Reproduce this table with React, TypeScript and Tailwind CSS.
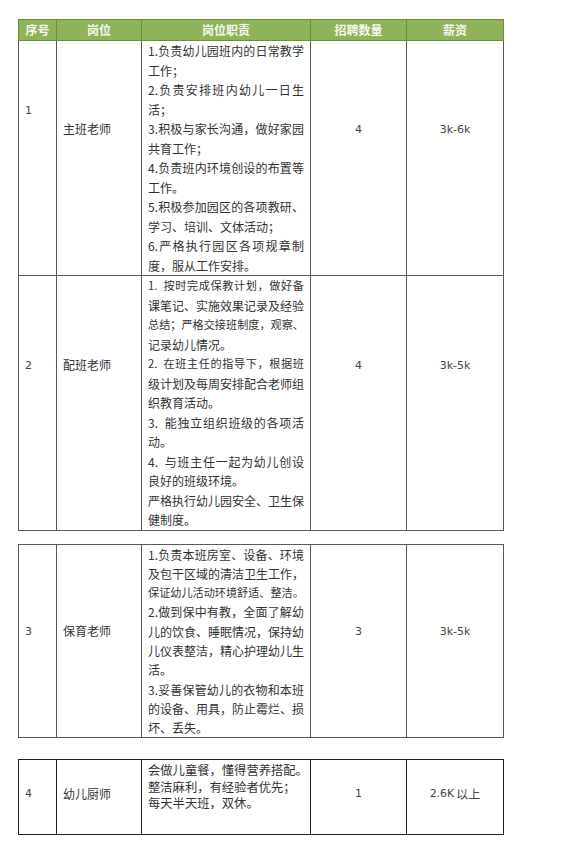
import type { ReactNode } from 'react'

const COLS = 'grid grid-cols-[38px_85px_169px_96px_97px]'
const CJK = { fontFamily: '"Noto Sans CJK SC", "Noto Sans", sans-serif' }
const LATIN = { fontFamily: 'Tahoma, "DejaVu Sans", "Liberation Sans", sans-serif' }

type Row = {
  no: string
  title: string
  duties: string[][]
  count: string
  pay: string
  noPad: string
  titlePad: string
}

const rows1: Row[] = [
  {
    no: '1',
    title: '主班老师',
    count: '4',
    pay: '3k-6k',
    noPad: 'pt-[59px]',
    titlePad: 'pt-[78px]',
    duties: [
      ['1.负责幼儿园班内的日常教学', '工作；'],
      ['2.负责安排班内幼儿一日生', '活；'],
      ['3.积极与家长沟通，做好家园', '共育工作；'],
      ['4.负责班内环境创设的布置等', '工作。'],
      ['5.积极参加园区的各项教研、', '学习、培训、文体活动；'],
      ['6.严格执行园区各项规章制', '度，服从工作安排。'],
    ],
  },
  {
    no: '2',
    title: '配班老师',
    count: '4',
    pay: '3k-5k',
    noPad: 'pt-[79px]',
    titlePad: 'pt-[79px]',
    duties: [
      ['1.  按时完成保教计划，做好备', '课笔记、实施效果记录及经验', '总结；严格交接班制度，观察、', '记录幼儿情况。'],
      ['2.  在班主任的指导下，根据班', '级计划及每周安排配合老师组', '织教育活动。'],
      ['3.  能独立组织班级的各项活', '动。'],
      ['4.  与班主任一起为幼儿创设', '良好的班级环境。'],
      ['严格执行幼儿园安全、卫生保', '健制度。'],
    ],
  },
]

const row3: Row = {
  no: '3',
  title: '保育老师',
  count: '3',
  pay: '3k-5k',
  noPad: 'pt-[76px]',
  titlePad: 'pt-[76px]',
  duties: [
    ['1.负责本班房室、设备、环境', '及包干区域的清洁卫生工作，', '保证幼儿活动环境舒适、整洁。'],
    ['2.做到保中有教，全面了解幼', '儿的饮食、睡眠情况，保持幼', '儿仪表整洁，精心护理幼儿生', '活。'],
    ['3.妥善保管幼儿的衣物和本班', '的设备、用具，防止霉烂、损', '坏、丢失。'],
  ],
}

// rough width of a line in "em", so long lines can be shrunk to fit the cell
function lineEm(s: string) {
  let w = 0
  for (const ch of s) w += ch.charCodeAt(0) > 255 ? 1 : 0.5
  return w
}

function DutyLine({ text, justify }: { text: string; justify: boolean }) {
  const size = Math.min(12, 156 / lineEm(text))
  return (
    <div
      className={`whitespace-pre ${justify ? 'text-justify [text-align-last:justify]' : 'text-left'}`}
      style={{ fontSize: size }}
    >
      {text}
    </div>
  )
}

function Cell({ className = '', children }: { className?: string; children?: ReactNode }) {
  return <div className={`border-r border-b border-[#595959] ${className}`}>{children}</div>
}

function BodyRow({ row, leading }: { row: Row; leading: string }) {
  return (
    <>
      <Cell className={`pl-[6px] text-[11px] text-[#444] ${leading} ${row.noPad}`}>
        <span style={LATIN}>{row.no}</span>
      </Cell>
      <Cell className={`pl-[6px] text-[12px] text-[#333] ${leading} ${row.titlePad}`}>{row.title}</Cell>
      <Cell className={`pl-[6px] pr-[6px] text-[#333] ${leading}`}>
        {row.duties.map((p, i) =>
          p.map((line, j) => <DutyLine key={`${i}-${j}`} text={line} justify={j < p.length - 1} />),
        )}
      </Cell>
      <Cell className={`text-center text-[11px] text-[#444] ${leading} ${row.titlePad}`}>
        <span style={LATIN}>{row.count}</span>
      </Cell>
      <Cell className={`text-center text-[11px] text-[#444] ${leading} ${row.titlePad}`}>
        <span style={LATIN}>{row.pay}</span>
      </Cell>
    </>
  )
}

const HEADERS = ['序号', '岗位', '岗位职责', '招聘数量', '薪资']

const cook = 'h-[75px] border-r border-b border-[#1f1f1f]'

export default function App() {
  return (
    <div className="min-h-[845px] w-[576px] bg-white pt-[19px]" style={CJK}>
      {/* table 1 */}
      <div className="ml-[18px] w-[486px]">
        <div className={`${COLS} border-t border-l border-[#6b8e3a] bg-[#8fb35a]`}>
          {HEADERS.map((h) => (
            <div
              key={h}
              className="flex h-[21px] items-center justify-center border-r border-b border-[#6b8e3a] text-[12px] font-bold text-[#f4f8ec]"
            >
              {h}
            </div>
          ))}
        </div>
        <div className={`${COLS} border-l border-[#595959]`}>
          {rows1.map((r) => (
            <BodyRow key={r.no} row={r} leading="leading-[19.5px]" />
          ))}
        </div>
      </div>

      {/* table 2 */}
      <div className={`${COLS} mt-[13px] ml-[18px] w-[486px] border-t border-l border-[#595959]`}>
        <BodyRow row={row3} leading="leading-[19.3px]" />
      </div>

      {/* table 3 */}
      <div className={`${COLS} mt-[21px] ml-[18px] w-[486px] border-t border-l border-[#1f1f1f]`}>
        <div className={`${cook} flex items-center pb-[6px] pl-[6px] text-[11px] text-[#444]`}>
          <span style={LATIN}>4</span>
        </div>
        <div className={`${cook} flex items-center pb-[6px] pl-[6px] text-[12px] text-[#333]`}>幼儿厨师</div>
        <div className={`${cook} whitespace-nowrap pt-[2px] pl-[6px] text-[12.3px] leading-[16.5px] text-[#333]`}>
          <div>会做儿童餐，懂得营养搭配。</div>
          <div>整洁麻利，有经验者优先；</div>
          <div>每天半天班，双休。</div>
        </div>
        <div className={`${cook} flex items-center justify-center pb-[6px] text-[11px] text-[#444]`}>
          <span style={LATIN}>1</span>
        </div>
        <div className={`${cook} flex items-center justify-center pb-[6px] text-[11px] text-[#444]`}>
          <span style={LATIN}>2.6K</span>
          <span className="ml-[2px] text-[12px]">以上</span>
        </div>
      </div>
    </div>
  )
}
